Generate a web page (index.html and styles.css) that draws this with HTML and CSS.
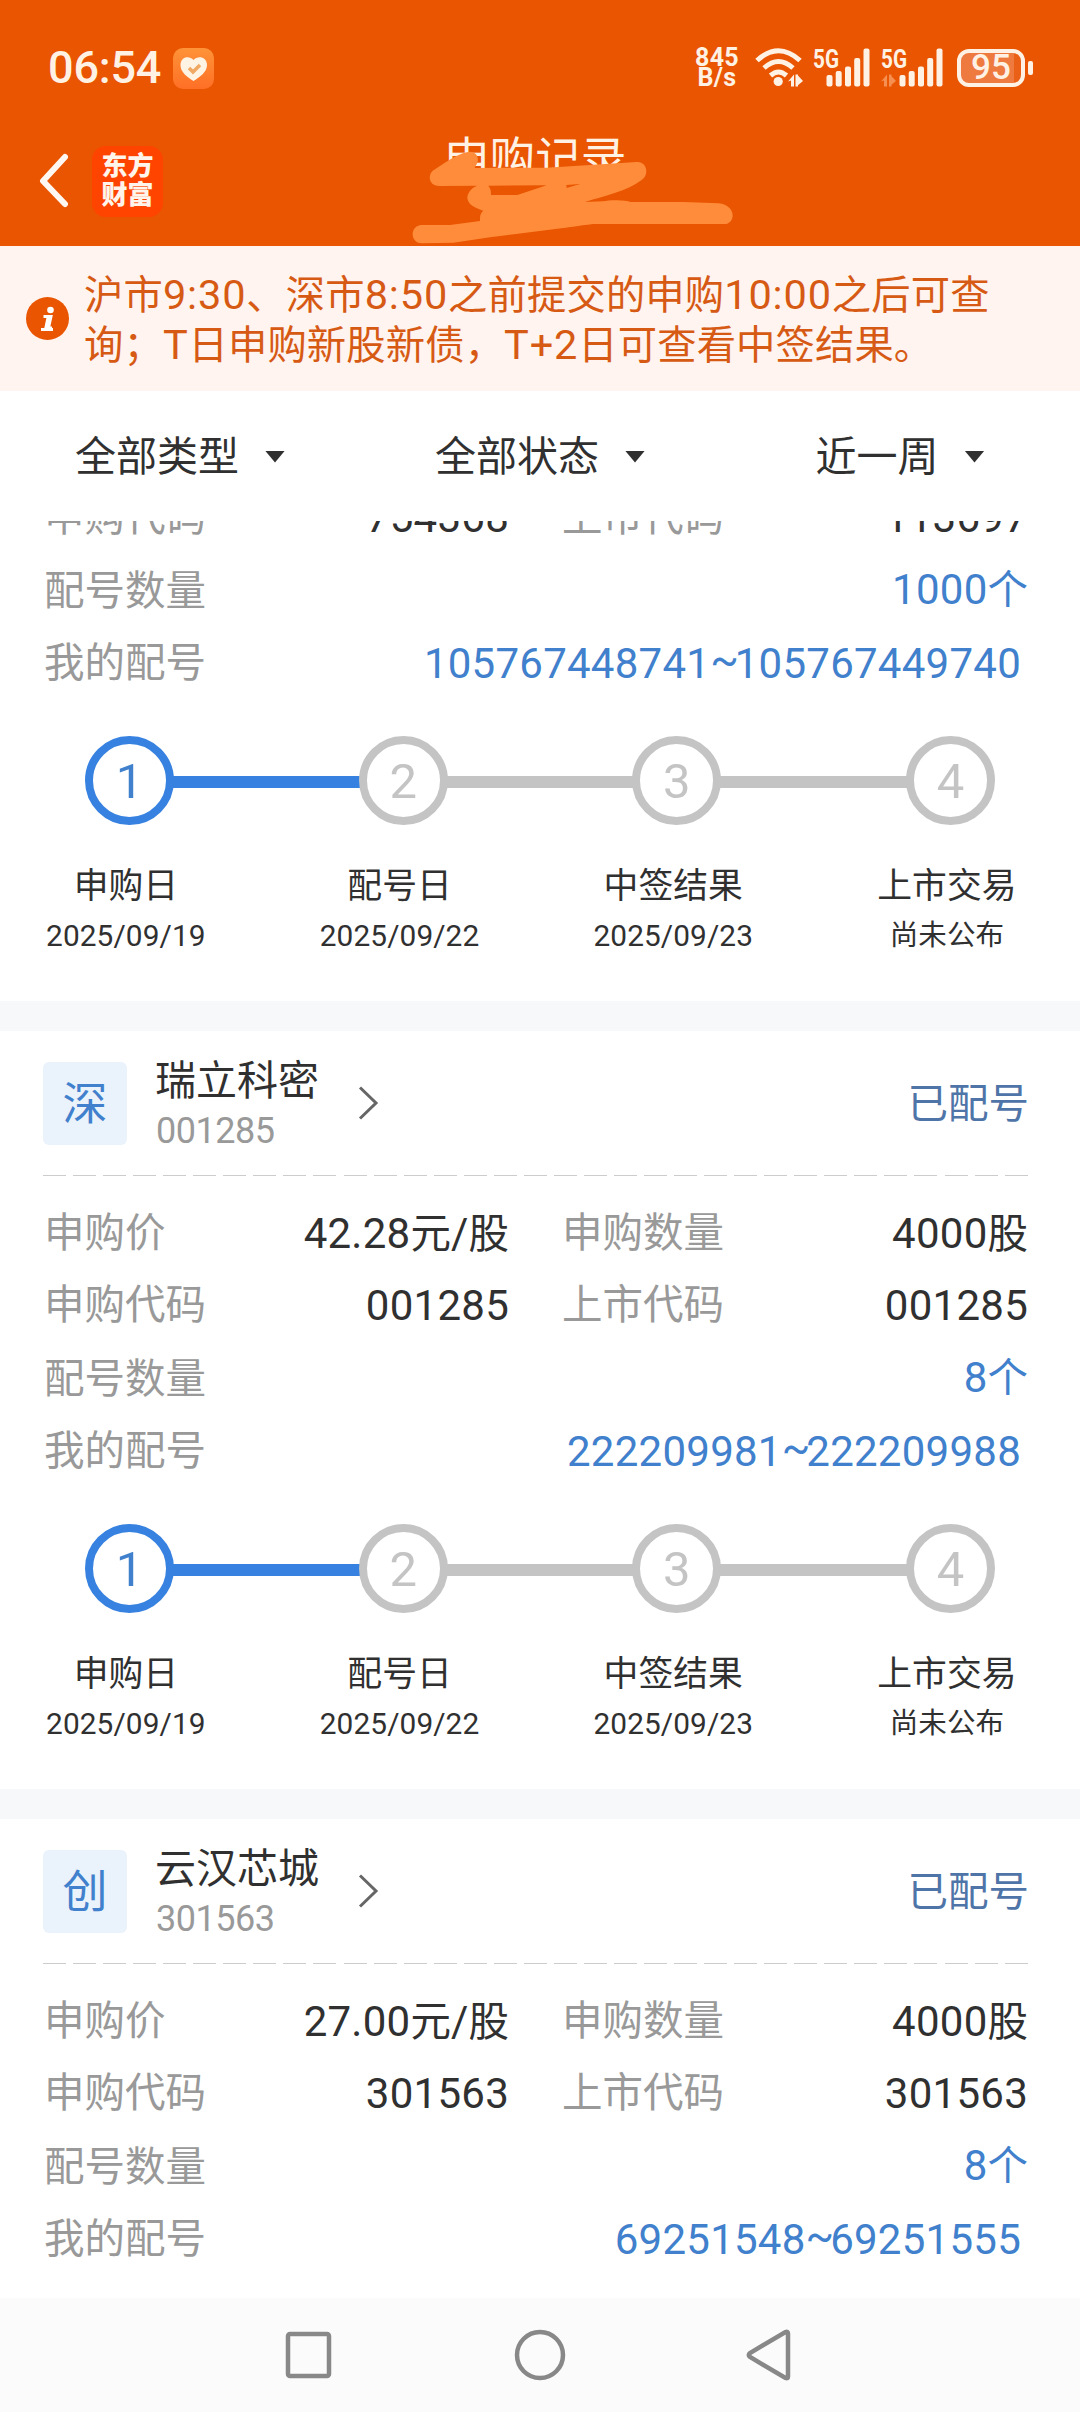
FILE: index.html
```html
<!DOCTYPE html>
<html lang="zh-CN">
<head>
<meta charset="utf-8">
<title>申购记录</title>
<link rel="stylesheet" href="styles.css">
</head>
<body>
<div class="app">
  <header class="header">
    <div class="status">
      <span class="clock">06:54</span>
      <svg class="health" width="41" height="41" viewBox="0 0 41 41">
        <defs><linearGradient id="hg" x1="0" y1="0" x2="0" y2="1"><stop offset="0" stop-color="#ff9338"/><stop offset="1" stop-color="#ff6f26"/></linearGradient></defs>
        <rect width="41" height="41" rx="10" fill="url(#hg)"/>
        <path d="M20.5 33C14 29 7.500 24 7.500 17C7.500 9 16 7 20.500 12C25 7 34 9 34 17C34 24 27 29 20.500 33Z" fill="#fff3e4"/>
        <path d="M16 20l4 4 7-7" fill="none" stroke="#f0a862" stroke-width="3.500"/>
      </svg>
      <div class="speed"><span>845</span><span>B/s</span></div>
      <svg class="wifi" width="50" height="40" viewBox="0 0 50 40">
        <g fill="none" stroke="#fff2e4" stroke-width="5">
          <path d="M2 12.500Q23.500 -7 45 12.500"/>
          <path d="M9 20Q23.500 7 38 20"/>
          <path d="M15.500 27.500Q23.500 20.500 31.500 27.500"/>
        </g>
        <circle cx="23.200" cy="33.500" r="4.600" fill="#fff2e4"/>
        <path d="M33 33.500l6-7v12h-3v-6zM42 26.500l6 6.500-6 5zM40.500 26.500h2.500v12h-2.500z" fill="#fff2e4"/>
      </svg>
      <svg class="signal" width="58" height="40" viewBox="0 0 58 40">
        <text x="0" y="19.500" textLength="26" lengthAdjust="spacingAndGlyphs">5G</text>
        <g fill="#fff2e4"><rect x="13.500" y="27" width="6" height="11.500" rx="2"/><rect x="22.700" y="23" width="6" height="15.500" rx="2"/><rect x="32" y="18.500" width="6" height="20" rx="2"/><rect x="41.200" y="10" width="6" height="28.500" rx="2"/><rect x="50.500" y=".5" width="6" height="38" rx="2"/></g>
      </svg>
      <svg class="signal second" width="64" height="40" viewBox="0 0 64 40">
        <text x="0" y="19.500" textLength="26" lengthAdjust="spacingAndGlyphs">5G</text>
        <path d="M0 33.500l6-7v12h-3v-6zM9 26.500l6 6.500-6 5zM8 26.500h2.500v12h-2.500z" fill="#f58f52"/>
        <g fill="#fff2e4"><rect x="18.500" y="27" width="6" height="11.500" rx="2"/><rect x="27.700" y="23" width="6" height="15.500" rx="2"/><rect x="37" y="18.500" width="6" height="20" rx="2"/><rect x="46.200" y="10" width="6" height="28.500" rx="2"/><rect x="55.500" y=".5" width="6" height="38" rx="2"/></g>
      </svg>
      <div class="battery"><span>95</span></div><i class="battery-tip"></i>
    </div>
    <div class="titlebar">
      <svg class="back" width="32" height="56" viewBox="0 0 32 56"><path d="M27 4L5 28L27 51" fill="none" stroke="#fff8f2" stroke-width="6" stroke-linecap="round" stroke-linejoin="round"/></svg>
      <div class="logo"><span>东方</span><span>财富</span></div>
      <h1>申购记录</h1>
      <svg class="scribble" width="360" height="130" viewBox="0 0 1080 390"><path fill="#ff8c3a" fill-rule="evenodd" d="M148 198C115 198 110 160 135 148C175 120 215 95 240 95C258 95 268 112 262 128L254 144L470 143L740 126C772 124 778 165 755 180C710 215 640 228 585 246L640 244C660 238 710 240 722 246L880 246L985 250C1042 256 1036 312 1003 312L610 312C560 318 540 322 520 324L300 352L190 368L95 370C58 368 60 316 95 315L180 315L270 303C270 290 270 280 280 272C245 262 232 248 232 232C234 212 252 200 262 197ZM295 197L470 196L382 225L303 225Q304 207 295 197ZM530 204L529 195L570 192Z"/></svg>
    </div>
  </header>

  <div class="notice">
    <svg width="43" height="43" viewBox="0 0 43 43"><circle cx="21.500" cy="21.500" r="21.500" fill="#e95501"/><circle cx="24.500" cy="13" r="3.300" fill="#fff"/><path d="M17.500 19.500h7.500l-2.500 11.500h3.500M15 32.500h12" fill="none" stroke="#fff" stroke-width="3"/><path d="M23 19.500l-2.500 12" stroke="#fff" stroke-width="4.500"/></svg>
    <p>沪市<b>9:30</b>、深市<b>8:50</b>之前提交的申购<b>10:00</b>之后可查<br>询；<b>T</b>日申购新股新债，<b>T+2</b>日可查看中签结果。</p>
  </div>

  <nav class="filters">
    <div>全部类型<i></i></div>
    <div>全部状态<i></i></div>
    <div>近一周<i></i></div>
  </nav>

  <main class="list">
    <section class="card partial">
      <dl class="rows">
        <div class="row"><dt>申购代码</dt><dd class="num">754368</dd><dt>上市代码</dt><dd class="num">113697</dd></div>
        <div class="row wide count"><dt>配号数量</dt><dd><b>1000</b>个</dd></div>
        <div class="row wide mine"><dt>我的配号</dt><dd class="num">105767448741<em>~</em>105767449740</dd></div>
      </dl>
      <div class="track"><span class="dot on">1</span><i class="on"></i><span class="dot">2</span><i></i><span class="dot">3</span><i></i><span class="dot">4</span></div>
      <ol class="labels">
        <li>申购日<small>2025/09/19</small></li><li>配号日<small>2025/09/22</small></li><li>中签结果<small>2025/09/23</small></li><li>上市交易<small class="cn">尚未公布</small></li>
      </ol>
    </section>

    <section class="card">
      <div class="head">
        <span class="badge">深</span>
        <div class="stock"><strong>瑞立科密</strong><span>001285</span></div>
        <svg class="go" width="22" height="36" viewBox="0 0 22 36"><path d="M2 2.500L18 18L2 33.500" fill="none" stroke="#666" stroke-width="3"/></svg>
        <span class="state">已配号</span>
      </div>
      <div class="dash"></div>
      <dl class="rows">
        <div class="row"><dt>申购价</dt><dd><b>42.28</b>元<b>/</b>股</dd><dt>申购数量</dt><dd><b>4000</b>股</dd></div>
        <div class="row"><dt>申购代码</dt><dd class="num">001285</dd><dt>上市代码</dt><dd class="num">001285</dd></div>
        <div class="row wide count"><dt>配号数量</dt><dd><b>8</b>个</dd></div>
        <div class="row wide mine"><dt>我的配号</dt><dd class="num">222209981<em>~</em>222209988</dd></div>
      </dl>
      <div class="track"><span class="dot on">1</span><i class="on"></i><span class="dot">2</span><i></i><span class="dot">3</span><i></i><span class="dot">4</span></div>
      <ol class="labels">
        <li>申购日<small>2025/09/19</small></li><li>配号日<small>2025/09/22</small></li><li>中签结果<small>2025/09/23</small></li><li>上市交易<small class="cn">尚未公布</small></li>
      </ol>
    </section>

    <section class="card">
      <div class="head">
        <span class="badge">创</span>
        <div class="stock"><strong>云汉芯城</strong><span>301563</span></div>
        <svg class="go" width="22" height="36" viewBox="0 0 22 36"><path d="M2 2.500L18 18L2 33.500" fill="none" stroke="#666" stroke-width="3"/></svg>
        <span class="state">已配号</span>
      </div>
      <div class="dash"></div>
      <dl class="rows">
        <div class="row"><dt>申购价</dt><dd><b>27.00</b>元<b>/</b>股</dd><dt>申购数量</dt><dd><b>4000</b>股</dd></div>
        <div class="row"><dt>申购代码</dt><dd class="num">301563</dd><dt>上市代码</dt><dd class="num">301563</dd></div>
        <div class="row wide count"><dt>配号数量</dt><dd><b>8</b>个</dd></div>
        <div class="row wide mine"><dt>我的配号</dt><dd class="num">69251548<em>~</em>69251555</dd></div>
      </dl>
    </section>
  </main>

  <footer class="sysnav">
    <svg width="50" height="54" viewBox="0 0 50 54"><rect x="3" y="6" width="41" height="42" rx="2" /></svg>
    <svg width="54" height="54" viewBox="0 0 54 54"><circle cx="27" cy="27" r="23"/></svg>
    <svg width="50" height="54" viewBox="0 0 50 54"><path d="M43 5.500Q43 3 40.500 4L5 25Q2.500 27 5 29L40.500 50Q43 51 43 48.500Z"/></svg>
  </footer>
</div>
</body>
</html>
```
FILE: styles.css
```css
* { box-sizing: border-box; margin: 0; padding: 0; }
body { background: #fff; font-family: Roboto, "Noto Sans CJK SC", sans-serif; color: #303030; }
i, em { font-style: normal; }
b { font-weight: 400; }

.app { display: flex; flex-direction: column; width: 1080px; height: 2412px; overflow: hidden; }

/* header */
.header { height: 246px; background: #e95501; color: #fff2e4; flex: none; }
.status { display: flex; align-items: center; height: 136px; padding: 0 47px 0 48px; }
.clock { width: 125px; font-size: 45px; font-weight: 500; letter-spacing: -.2px; line-height: 56px; }
.health { margin-right: auto; }
.speed { display: flex; flex-direction: column; width: 46px; font-size: 25px; font-weight: 700; line-height: 20px; text-align: center; margin-right: 15px; letter-spacing: .3px; }
.wifi { margin-right: 8px; }
.signal { margin-right: 10px; overflow: visible; }
.signal.second { margin-right: 12px; }
.signal text { font: 700 25px Roboto, sans-serif; fill: #fff2e4; }
.battery { width: 68px; height: 38px; border: 4px solid #fff2e4; border-radius: 12px; background: linear-gradient(90deg, #ee7a3f 88%, #ea6016 88%); text-align: center; font-size: 35px; font-weight: 500; line-height: 30px; }
.battery-tip { width: 5px; height: 14px; margin-left: 3px; border-radius: 2px; background: #fff2e4; }
.titlebar { position: relative; display: flex; align-items: center; height: 110px; padding: 0 0 20px 38px; }
.back { margin-right: 22px; }
.logo { display: flex; flex-direction: column; align-items: center; justify-content: center; width: 71px; height: 71px; border-radius: 14px; background: #ff4400; color: #fff5ea; font: 900 26px/29px Roboto, "Noto Sans CJK SC", sans-serif; }
.titlebar h1 { margin: -42px 0 0 281px; font-size: 45.6px; font-weight: 400; line-height: 60px; }
.scribble { position: absolute; left: 390px; top: -16px; }

/* notice */
.notice { display: flex; align-items: center; gap: 15px; flex: none; height: 145px; padding-left: 26px; background: #fff4ef; color: #d65a14; }
.notice p { padding-top: 5px; font-size: 39.3px; letter-spacing: .15px; line-height: 50.5px; white-space: nowrap; }
.notice b { font-size: 41.5px; letter-spacing: .85px; line-height: 1; }

/* filters */
.filters { display: grid; grid-template-columns: repeat(3, 1fr); flex: none; height: 130px; padding-top: 1px; font-size: 41px; line-height: 60px; }
.filters div { display: flex; align-items: center; justify-content: center; gap: 26px; }
.filters i { width: 20px; height: 12px; background: #303030; clip-path: polygon(0 0, 100% 0, 50% 100%); }

/* records */
.list { flex: 1; overflow: hidden; }
.card { height: 788px; border-bottom: 30px solid #f7f8fa; }
.card.partial { height: 551px; margin-top: -41px; }
.head { display: flex; align-items: center; height: 144px; padding: 0 51px 0 43px; }
.badge { width: 84px; height: 83px; border-radius: 6px; background: #eaf2fb; color: #4080cc; font-size: 45px; line-height: 86px; text-align: center; }
.stock { display: flex; flex-direction: column; margin-left: 28px; width: 203px; padding-top: 5px; }
.stock strong { font-size: 41px; font-weight: 400; line-height: 52px; }
.stock span { font-size: 36px; line-height: 49px; color: #999; letter-spacing: -.5px; padding-left: 1px; }
.state { margin-left: auto; padding-top: 2px; font-size: 40.500px; line-height: 60px; color: #4f75a8; }
.dash { height: 1px; margin: 0 51px 0 43px; background: repeating-linear-gradient(90deg, #ccc 0 23px, transparent 23px 30.050px); }
.rows { padding: 20px 52px 0 44px; }
.partial .rows { padding-top: 0; }
.row { display: grid; grid-template-columns: 232px 233px 53px 180px 1fr; height: 72px; font-size: 40.500px; line-height: 75px; white-space: nowrap; }
.row dt { color: #999; }
.row dt:nth-of-type(2) { grid-column: 4; }
.row dd { text-align: right; }
.row b, .row .num { font-size: 42px; letter-spacing: .25px; }
.row.wide { grid-template-columns: 232px 1fr; }
.row.wide dd { color: #4080cc; }
.row.count { height: 74px; }
.row.count dt { line-height: 79px; }
.row.mine dd { padding-right: 7px; }
.row em { display: inline-block; line-height: 1; letter-spacing: -4px; transform: translateY(-4px); }

/* progress */
.track { display: flex; align-items: center; margin: 38px 85px 0; height: 89px; }
.track i { flex: 1; height: 12px; margin: 2px -2px 0; background: #c4c4c4; }
.track i.on { background: #3782e0; }
.dot { position: relative; width: 89px; height: 89px; border: 8px solid #c4c4c4; border-radius: 50%; background: #fff; color: #c4c4c4; font-size: 49px; line-height: 75px; text-align: center; }
.dot.on { border-color: #3782e0; color: #4080cc; }
.labels { display: grid; grid-template-columns: repeat(4, 273.700px); margin: 33px -4px 0 -11px; list-style: none; text-align: center; font-size: 34.800px; line-height: 56px; }
.labels small { display: block; font-size: 29.800px; line-height: 44px; letter-spacing: .1px; }
.labels small.cn { font-size: 28.500px; }

/* system navigation */
.sysnav { display: flex; flex: none; justify-content: center; gap: 178px; height: 114px; padding-top: 30px; background: #fbfbfb; }
.sysnav svg { fill: none; stroke: #888; stroke-width: 4.500; }
```
